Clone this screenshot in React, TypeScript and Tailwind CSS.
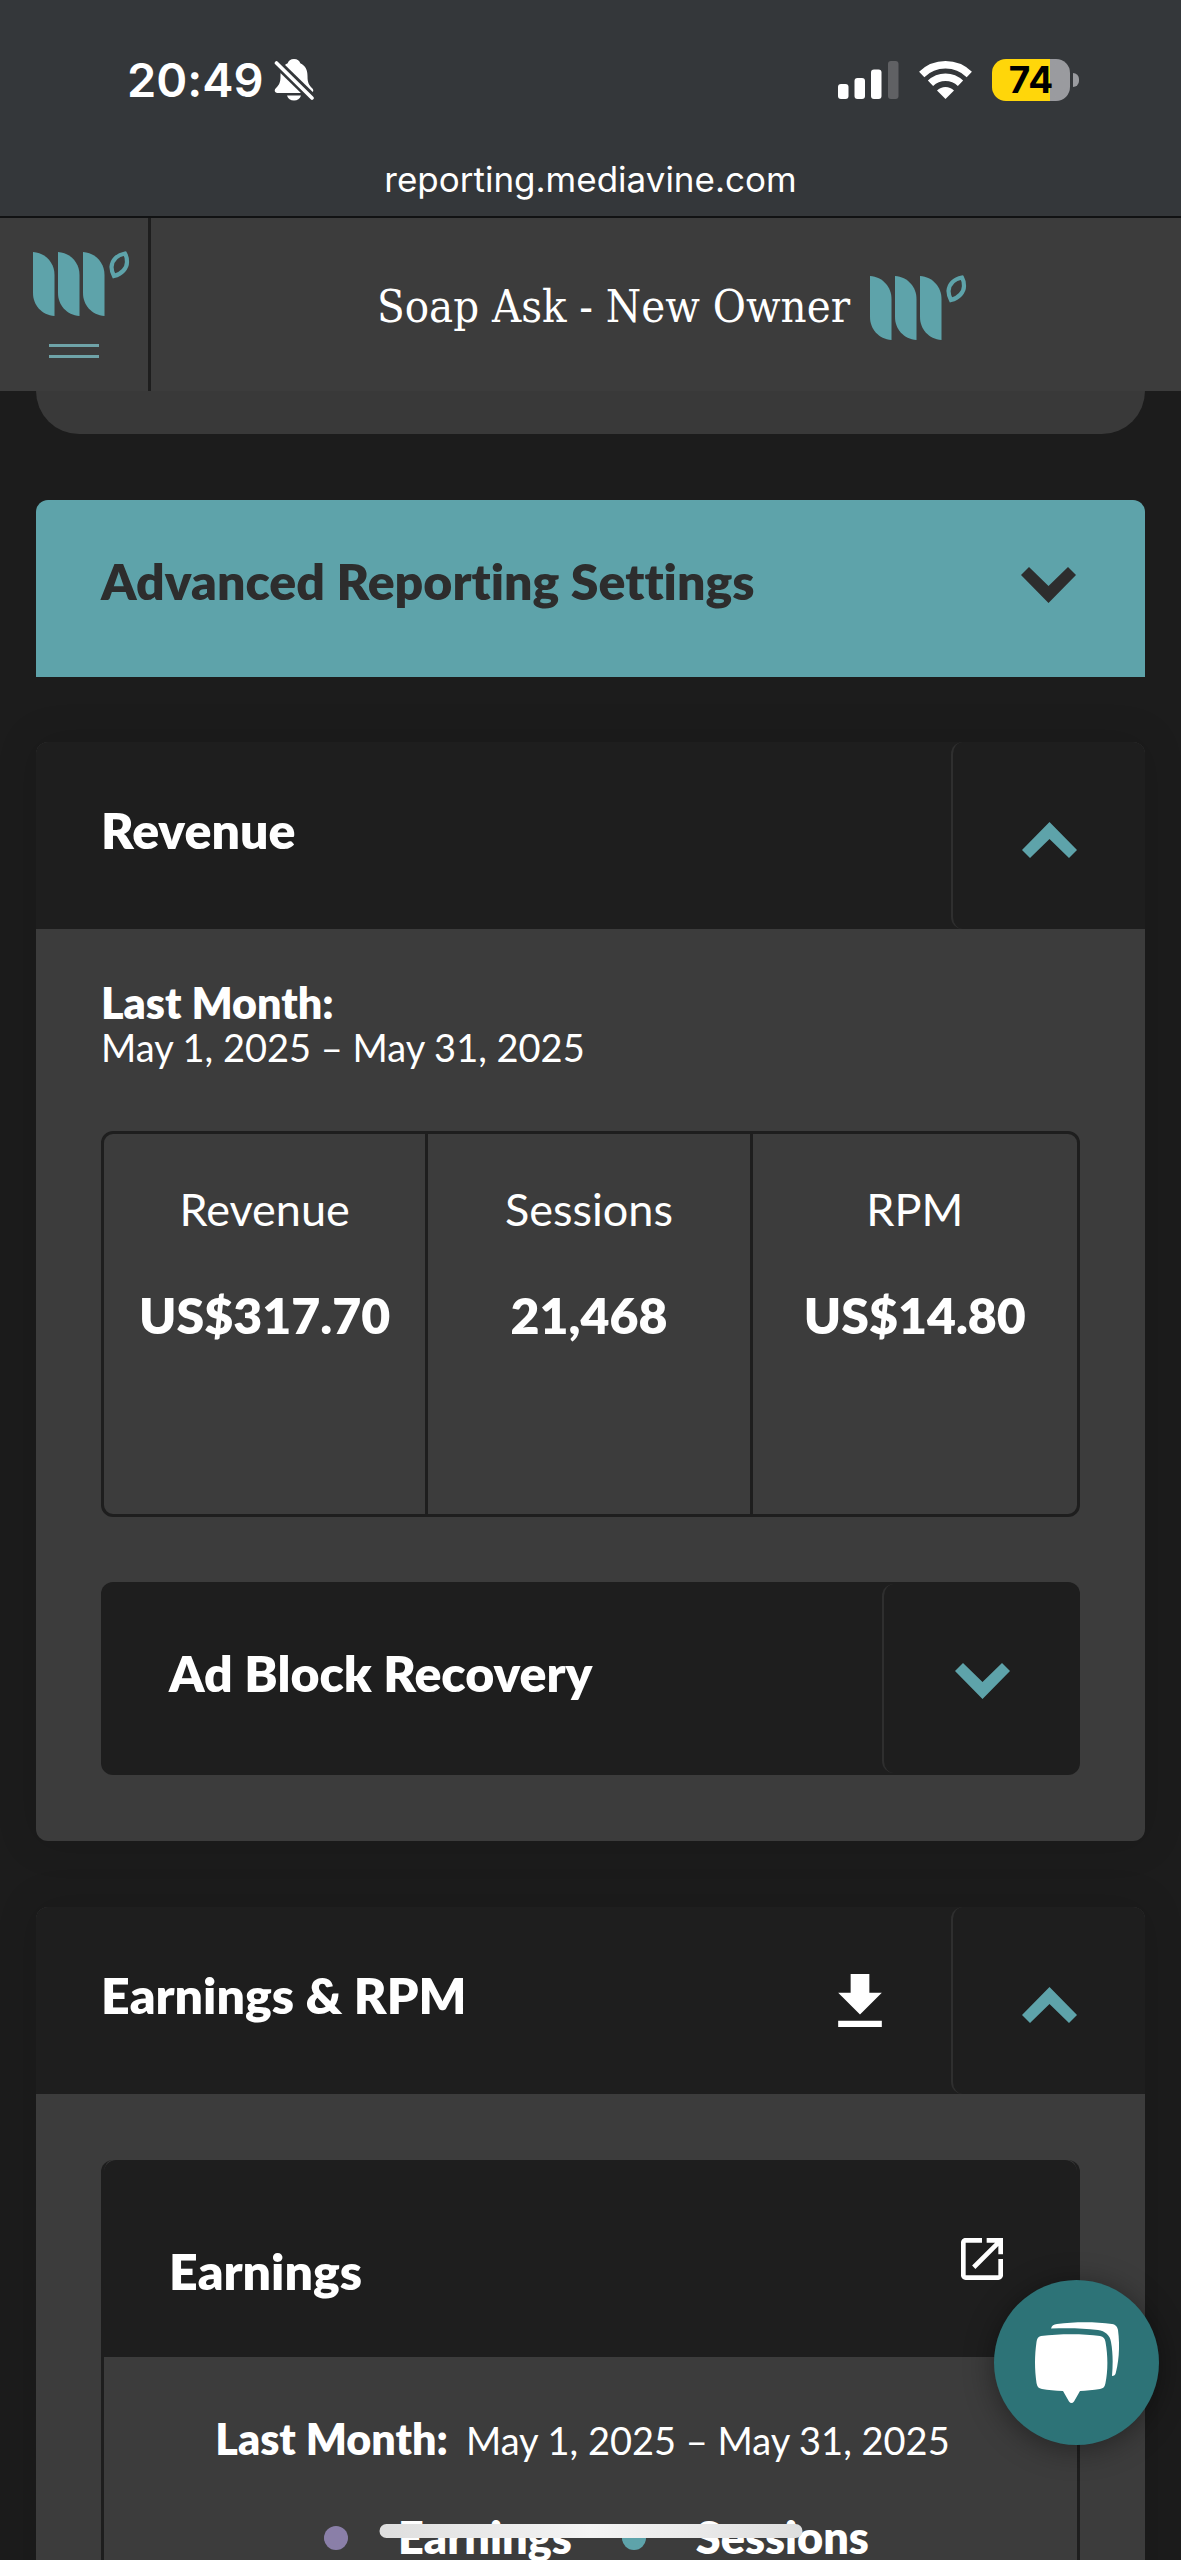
import type { ReactNode } from 'react';

function Logo() {
  return (
    <svg className="h-[66px] w-[97px] shrink-0" viewBox="0 0 97 66" fill="none" aria-hidden="true">
      <g fill="#5ea3aa">
        <path d="M0 2C13 3 21.500 13 21.500 25V66C8.500 65 0 55 0 43Z" />
        <path d="M25 2C38 3 46.500 13 46.500 25V66C33.500 65 25 55 25 43Z" />
        <path d="M50 2C63 3 71.500 13 71.500 25V66C58.500 65 50 55 50 43Z" />
      </g>
      <path
        d="M92 3.500C84 5 79 10 78.500 17C78.500 20 79.500 23 81 26C89 24 94 18 94 12C94 9 93.500 6 92 3.500Z"
        stroke="#5ea3aa"
        strokeWidth="4.200"
      />
    </svg>
  );
}

function Chevron({ up = false, className }: { up?: boolean; className?: string }) {
  return (
    <svg className={className} width="55" height="36" viewBox="0 0 55 36" fill="currentColor" aria-hidden="true">
      {up ? (
        <path d="M27.500 0L55 28L47 36L27.500 17L8 36L0 28Z" />
      ) : (
        <path d="M27.500 36L55 8L47 0L27.500 19L8 0L0 8Z" />
      )}
    </svg>
  );
}

function StatusBar() {
  return (
    <div className="flex h-[218px] shrink-0 flex-col border-b-2 border-[#111213] bg-[#34373a] pt-14 font-['Inter',sans-serif]">
      <div className="flex items-center justify-between pr-[102px] pl-[127px]">
        <div className="flex items-center gap-[10px]">
          <span className="text-[47px] leading-12 font-semibold">20:49</span>
          <svg width="40" height="42" viewBox="0 0 40 42" aria-label="Silent mode" role="img">
            <path
              fill="#fff"
              d="M20 0C23.500 0 25.500 2 26.300 4.200C31.500 6.500 33.500 11 33.500 17C33.500 24 35 26 38 29C40.500 31.500 39 34 36.500 34H3.500C1 34 -.500 31.500 2 29C5 26 6.500 24 6.500 17C6.500 11 8.500 6.500 13.700 4.200C14.500 2 16.500 0 20 0ZM13 36.500H27C26 40 23.500 41.500 20 41.500C16.500 41.500 14 40 13 36.500Z"
            />
            <path stroke="#34373a" strokeWidth="9" d="M0 1.500L40 40.500" />
            <path stroke="#fff" strokeWidth="3.600" strokeLinecap="round" d="M2.500 4L38 39" />
          </svg>
        </div>
        <div className="flex items-center">
          <svg width="61" height="38" viewBox="0 0 61 38" fill="#fff" aria-label="Signal" role="img">
            <rect y="23" width="10.500" height="15" rx="3" />
            <rect x="16.500" y="17" width="10.500" height="21" rx="3" />
            <rect x="33" y="8.500" width="10.500" height="29.500" rx="3" />
            <rect x="50" width="10.500" height="38" rx="3" fill="#606164" />
          </svg>
          <svg className="ml-5" width="53" height="38" viewBox="0 0 53 38" aria-label="Wi-Fi" role="img">
            <g fill="none" stroke="#fff" strokeWidth="7.500">
              <path d="M2.700 13.500A34 34 0 0 1 50.300 13.500" />
              <path d="M11.500 22.300A21.500 21.500 0 0 1 41.500 22.300" />
            </g>
            <path fill="#fff" d="M26.500 38L18 29.600A12 12 0 0 1 35 29.600Z" />
          </svg>
          <div className="ml-5 flex h-[42px] w-[78px] items-center justify-center rounded-[14px] bg-linear-to-r from-[#ffd60a] from-75% to-[#9a9b9f] to-75%">
            <span className="text-[37px] leading-[42px] font-bold text-black">74</span>
          </div>
          <div className="ml-[3px] h-[14px] w-[6px] rounded-r-full bg-[#9a9b9f]" />
        </div>
      </div>
      <p className="mt-[50px] text-center text-[35px] leading-[50px]">reporting.mediavine.com</p>
    </div>
  );
}

function SiteHeader() {
  return (
    <header className="flex h-[173px] shrink-0 items-stretch bg-[#3c3c3c]">
      <button type="button" aria-label="Open menu" className="flex w-[151px] flex-col items-center border-r-3 border-[#1e1e1e] pt-8">
        <span className="ml-[14px]">
          <Logo />
        </span>
        <span className="mt-[28px] block h-[3px] w-[50px] bg-[#6fa3a8]" />
        <span className="mt-[8px] block h-[3px] w-[50px] bg-[#6fa3a8]" />
      </button>
      <div className="flex flex-1 items-center justify-center gap-5 pt-1 pl-3">
        <h1 className="font-['DejaVu_Serif_Condensed','DejaVu_Serif',serif] text-[45px] leading-14">Soap Ask - New Owner</h1>
        <Logo />
      </div>
    </header>
  );
}

function PanelHeader({ title, label, children }: { title: string; label: string; children?: ReactNode }) {
  return (
    <div className="flex h-[187px] items-stretch rounded-t-xl bg-[#1e1e1e]">
      <h2 className="flex flex-1 items-center pb-3 pl-[65px] text-[50px] leading-[60px] font-extrabold">{title}</h2>
      {children}
      <button
        type="button"
        aria-label={label}
        className="flex w-[194px] items-center justify-center rounded-l-xl border-l-2 border-[#2f2f2f] pt-2"
      >
        <Chevron up className="text-[#5ea3aa]" />
      </button>
    </div>
  );
}

const stats = [
  { label: 'Revenue', value: 'US$317.70' },
  { label: 'Sessions', value: '21,468' },
  { label: 'RPM', value: 'US$14.80' },
];

const legend = [
  { label: 'Earnings', dot: 'bg-[#8a7fa8]' },
  { label: 'Sessions', dot: 'bg-[#5ea3aa]' },
];

export default function App() {
  return (
    <div className="relative flex h-screen flex-col overflow-hidden bg-[#1c1c1c] font-['Lato',sans-serif] text-white [font-variant-ligatures:none]">
      <StatusBar />
      <SiteHeader />

      <main className="flex min-h-0 flex-1 flex-col px-9">
        <div className="h-[43px] shrink-0 rounded-b-[54px] bg-[#393939]" />

        <button
          type="button"
          className="mt-[66px] flex h-[177px] shrink-0 items-center justify-between rounded-t-xl bg-[#5ea3aa] pr-[69px] pb-2 pl-[65px] text-[#2d2d2d]"
        >
          <span className="pb-2 text-[50px] leading-[60px] font-extrabold">Advanced Reporting Settings</span>
          <Chevron />
        </button>

        <section className="mt-[65px] shrink-0 rounded-xl bg-[#3c3c3c] shadow-[0_0_40px_rgba(0,0,0,0.15)]">
          <PanelHeader title="Revenue" label="Collapse Revenue" />
          <div className="px-[65px] pt-[52px] pb-[66px]">
            <p className="text-[43px] leading-11 font-extrabold">Last Month:</p>
            <p className="text-[38px] leading-11">May 1, 2025 – May 31, 2025</p>

            <dl className="mt-[62px] grid h-[386px] grid-cols-3 divide-x-3 divide-[#1e1e1e] rounded-xl border-3 border-[#1e1e1e] text-center">
              {stats.map((s) => (
                <div key={s.label} className="pt-[47px]">
                  <dt className="text-[45px] leading-[56px]">{s.label}</dt>
                  <dd className="mt-12 text-[50px] leading-[60px] font-extrabold">{s.value}</dd>
                </div>
              ))}
            </dl>

            <div className="mt-[65px] flex h-[193px] items-stretch rounded-xl bg-[#1e1e1e]">
              <h3 className="flex flex-1 items-center pb-3 pl-[68px] text-[50px] leading-[60px] font-extrabold">Ad Block Recovery</h3>
              <button
                type="button"
                aria-label="Expand Ad Block Recovery"
                className="my-[2px] flex w-[198px] items-center justify-center rounded-xl border-l-2 border-[#2f2f2f] pt-1"
              >
                <Chevron className="text-[#5ea3aa]" />
              </button>
            </div>
          </div>
        </section>

        <section className="mt-[66px] shrink-0 rounded-t-xl bg-[#3c3c3c] shadow-[0_0_40px_rgba(0,0,0,0.15)]">
          <PanelHeader title="Earnings & RPM" label="Collapse Earnings & RPM">
            <button type="button" aria-label="Download" className="mr-[69px] flex items-center">
              <svg width="44" height="53" viewBox="5 3 14 17" fill="currentColor" aria-hidden="true">
                <path d="M19 9h-4V3H9v6H5l7 7 7-7zM5 18v2h14v-2H5z" />
              </svg>
            </button>
          </PanelHeader>
          <div className="px-[65px] pt-[66px]">
            <div className="rounded-t-xl border-x-3 border-[#1e1e1e]">
              <div className="flex h-[197px] items-center justify-between rounded-t-xl bg-[#1e1e1e] pr-[74px] pl-[65px]">
                <h3 className="pt-6 text-[50px] leading-[60px] font-extrabold">Earnings</h3>
                <button type="button" aria-label="Open Earnings">
                  <svg width="42" height="42" viewBox="3 3 18 18" fill="currentColor" aria-hidden="true">
                    <path d="M19 19H5V5h7V3H5c-1.100 0-2 .9-2 2v14c0 1.100.9 2 2 2h14c1.100 0 2-.9 2-2v-7h-2v7zM14 3v2h3.590l-9.830 9.830 1.410 1.410L19 6.410V10h2V3h-7z" />
                  </svg>
                </button>
              </div>
              <p className="flex items-baseline justify-center gap-[18px] pt-[52px] pr-4 text-[38px] leading-[60px]">
                <strong className="text-[43px] font-extrabold">Last Month:</strong>
                <span>May 1, 2025 – May 31, 2025</span>
              </p>
              <ul className="flex h-[200px] justify-center gap-[50px] pt-[38px] pl-3">
                {legend.map((l) => (
                  <li key={l.label} className="flex h-[60px] items-center gap-[50px] text-[45px] font-extrabold">
                    <span className={`size-6 rounded-full ${l.dot}`} />
                    {l.label}
                  </li>
                ))}
              </ul>
            </div>
          </div>
        </section>
      </main>

      <button
        type="button"
        aria-label="Chat"
        className="absolute right-[22px] bottom-[115px] flex size-[165px] items-center justify-center rounded-full bg-[#2d7377] shadow-[0_4px_30px_rgba(0,0,0,0.4)]"
      >
        <svg width="84" height="81" viewBox="0 0 84 81" fill="#fff" aria-hidden="true">
          <path d="M6 14C25 11.500 48 11.500 65 14C68.500 14.500 70 16.500 70.500 20C73 34 73 48 70.500 61C70 64.500 68.500 66.500 65 67C58 68 51 68.700 45 69L39 79.500Q36.500 82.500 34 79.500L28 69C20 68.700 13 68 7 67C3.500 66.500 2 64.500 1.500 61C-.500 47 -.500 34 1.500 20C2 16.500 3 14.500 6 14Z" />
          <path d="M16 6.500C17 3.500 18.500 2.500 22 2C40 -.500 60 -.500 77 2C81 2.700 82.500 5 83 8C85 23 84 38 81 50C80.500 53 79 54 77 54C78 42 78 31 76 20C75 13 70 9 63 8C48 6 32 6 16 6.500Z" />
        </svg>
      </button>

      <div className="absolute bottom-[22px] left-1/2 h-[14px] w-[423px] -translate-x-1/2 rounded-full bg-linear-to-r from-[#dedede] via-[#f4f4f4] to-[#dedede]" />
    </div>
  );
}
